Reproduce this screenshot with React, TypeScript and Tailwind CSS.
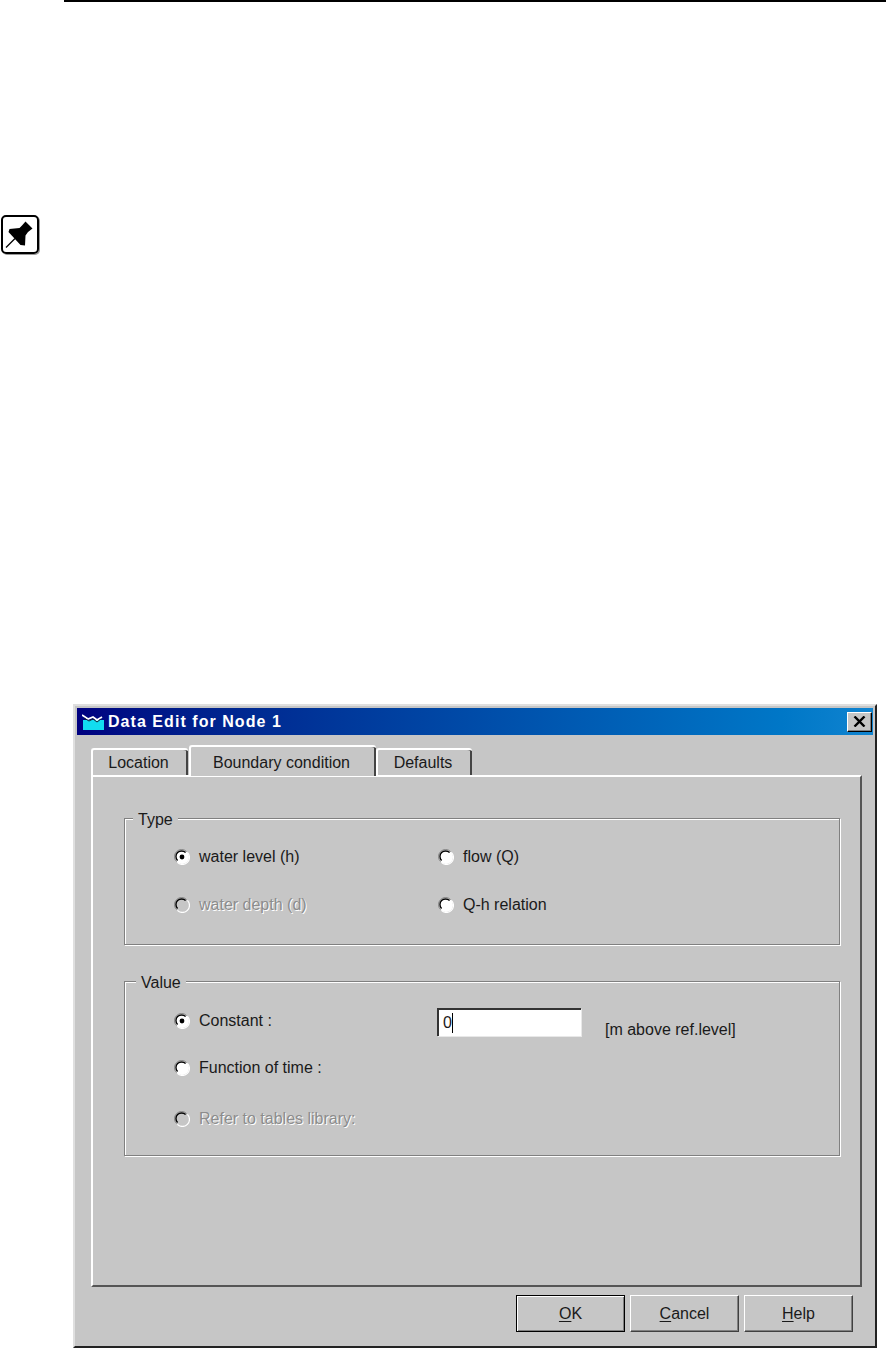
const font = "font-['Liberation_Sans',Arial,sans-serif]";

function Radio({ checked, disabled }: { checked?: boolean; disabled?: boolean }) {
  return (
    <svg width="16" height="16" viewBox="0 0 16 16" className="shrink-0">
      <circle cx="8" cy="8" r="7" fill={disabled ? "#c6c6c6" : "#fff"} />
      <path d="M2.6 12.6A7 7 0 0 1 12.6 2.6" fill="none" stroke="#808080" strokeWidth="1" />
      <path d="M3.6 11.6A5.6 5.6 0 0 1 11.6 3.6" fill="none" stroke="#000" strokeWidth="1.4" />
      <path d="M13.4 3.4A7 7 0 0 1 3.4 13.4" fill="none" stroke="#fff" strokeWidth="1.2" />
      {checked && <circle cx="8" cy="8" r="2.4" fill="#000" />}
    </svg>
  );
}

function Option({ label, checked, disabled }: { label: string; checked?: boolean; disabled?: boolean }) {
  return (
    <div className="flex items-center gap-[9px] h-[24px]">
      <Radio checked={checked} disabled={disabled} />
      <span className={disabled ? "text-[#8c8c8c] [text-shadow:1px_1px_0_#fff]" : "text-[#1a1a1a]"}>{label}</span>
    </div>
  );
}

function Group({ title, className, legendClass, children }: { title: string; className: string; legendClass: string; children: React.ReactNode }) {
  return (
    <div className={`relative w-[716px] ml-[31px] border border-[#808080] shadow-[1px_1px_0_#fff,inset_1px_1px_0_#fff] pl-[49px] ${className}`}>
      <span className={`absolute top-[-8px] bg-[#c6c6c6] px-[5px] leading-[18px] text-[#1a1a1a] ${legendClass}`}>{title}</span>
      {children}
    </div>
  );
}

function Tab({ label, active, className }: { label: string; active?: boolean; className: string }) {
  return (
    <div
      className={`relative flex items-center justify-center border-t-2 border-l-2 border-white rounded-t-[3px] text-[#1a1a1a] shadow-[inset_-2px_0_0_#444] pr-[4px] ${active ? "h-[31px] -mb-px z-10 bg-[#c6c6c6] pt-[2px]" : "h-[27px]"} ${className}`}
    >
      {label}
    </div>
  );
}

function Btn({ k, rest, focused }: { k: string; rest: string; focused?: boolean }) {
  return (
    <div
      className={`w-[109px] h-[37px] flex items-center justify-center text-[#1a1a1a] bg-[#c6c6c6] ${
        focused
          ? "border border-black shadow-[inset_1px_1px_0_#fff,inset_-1px_-1px_0_#808080]"
          : "border-t border-l border-white border-r border-b border-r-[#404040] border-b-[#404040] shadow-[inset_-1px_-1px_0_#808080]"
      }`}
    >
      <span>
        <span className="underline underline-offset-2">{k}</span>
        {rest}
      </span>
    </div>
  );
}

export default function App() {
  return (
    <div className={`w-[886px] h-[1348px] bg-white overflow-hidden ${font} text-[16px]`}>
      <div className="ml-[64px] h-[2px] bg-black" />

      {/* note pin */}
      <div className="mt-[213px] ml-[1px] w-[38px] h-[39px] border-2 border-black rounded-[5px] shadow-[1px_1px_0_#999]">
        <svg width="34" height="35" viewBox="0 0 34 35">
          <g transform="translate(-2 -2)">
            <path d="M24.5 6.5L31.5 13.5 27 17 24.5 20.5 24 30.5 19.5 30 7.5 17 8.5 14 18.5 13 21 10.5Z" fill="#000" />
            <path d="M14 23.5L5 32.5" stroke="#000" strokeWidth="1.2" />
          </g>
        </svg>
      </div>

      {/* dialog */}
      <div className="mt-[450px] ml-[73px] w-[804px] h-[644px] bg-[#c6c6c6] border-t-2 border-l-2 border-[#dfdfdf] border-r-2 border-r-[#222] border-b-2 border-b-[#222] pt-[2px] pl-[2px]">
        <div className="w-[796px] h-[27px] flex items-center pl-[5px] bg-gradient-to-r from-[#000080] to-[#1084d0]">
          <svg width="22" height="18" viewBox="0 0 22 18" className="shrink-0">
            <rect x="1" y="7" width="21" height="10" fill="#12dcf0" />
            <path d="M0 2L6 6 11 4 15 7 20 4" fill="none" stroke="#fff" strokeWidth="1.8" />
            <path d="M2 5L7 8 11 6 15 9 19 6" fill="none" stroke="#123" strokeWidth="1" />
          </svg>
          <span className="ml-[4px] font-bold text-[16px] tracking-[1.05px] text-white">Data Edit for Node 1</span>
          <div className="ml-auto mr-[1px] w-[25px] h-[20px] flex items-center justify-center bg-[#c6c6c6] border-t border-l border-white border-r border-b border-r-black border-b-black shadow-[inset_-1px_-1px_0_#808080]">
            <svg width="13" height="11" viewBox="0 0 13 11">
              <path d="M1.5 0.5L11.5 10.5M11.5 0.5L1.5 10.5" stroke="#000" strokeWidth="2.4" />
            </svg>
          </div>
        </div>

        <div className="ml-[14px] mt-[10px] flex items-end h-[30px] w-[771px]">
          <Tab label="Location" className="w-[97px]" />
          <Tab label="Boundary condition" active className="w-[187px] ml-[1px]" />
          <Tab label="Defaults" className="w-[96px]" />
        </div>

        <div className="ml-[14px] w-[771px] h-[512px] border-t-2 border-l-2 border-white border-r-2 border-b-2 border-r-[#555] border-b-[#555] pt-[41px]">
          <Group title="Type" legendClass="left-[8px]" className="h-[127px] pt-[26px]">
            <div className="grid grid-cols-[264px_auto] gap-y-[24px]">
              <Option label="water level (h)" checked />
              <Option label="flow (Q)" />
              <Option label="water depth (d)" disabled />
              <Option label="Q-h relation" />
            </div>
          </Group>

          <Group title="Value" legendClass="left-[11px]" className="h-[175px] mt-[36px] pt-[27px]">
            <div className="flex items-start h-[24px]">
              <div className="w-[263px]">
                <Option label="Constant :" checked />
              </div>
              <div className="w-[144px] h-[28px] -mt-[1px] shrink-0 bg-white border-t-2 border-l-2 border-[#333] shadow-[1px_1px_0_#e8e8e8] flex items-center pl-[4px] text-[#1a1a1a]">
                <span className="border-r border-black leading-[20px]">0</span>
              </div>
              <span className="ml-[24px] mt-[9px] text-[#1a1a1a] whitespace-nowrap">[m above ref.level]</span>
            </div>
            <div className="mt-[23px]">
              <Option label="Function of time :" />
            </div>
            <div className="mt-[27px]">
              <Option label="Refer to tables library:" disabled />
            </div>
          </Group>
        </div>

        <div className="mt-[8px] w-[776px] flex justify-end gap-[5px]">
          <Btn k="O" rest="K" focused />
          <Btn k="C" rest="ancel" />
          <Btn k="H" rest="elp" />
        </div>
      </div>
    </div>
  );
}
